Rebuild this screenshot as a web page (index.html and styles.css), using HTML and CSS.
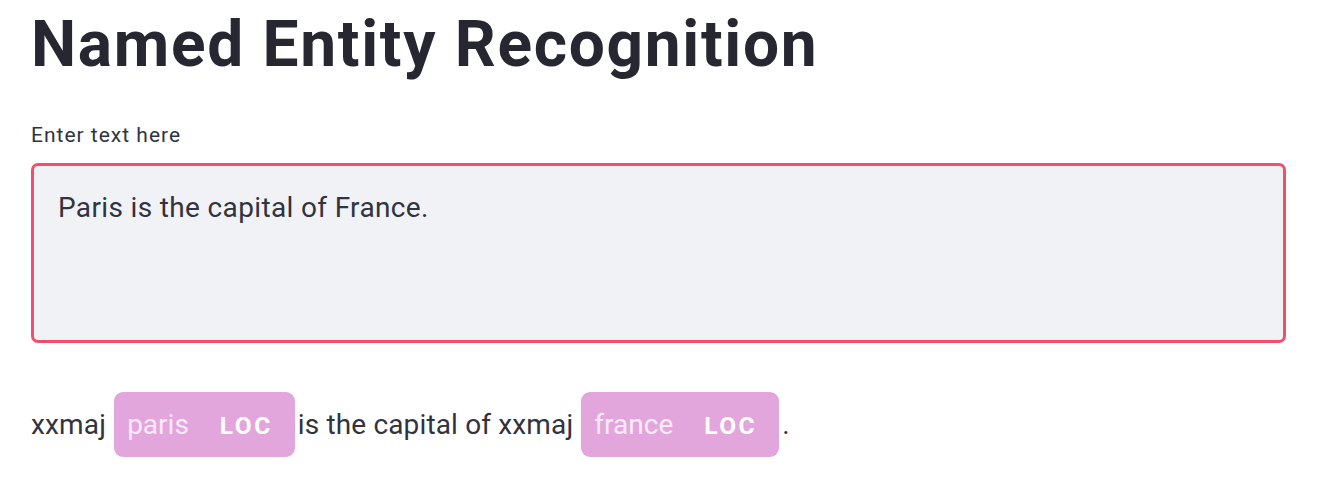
FILE: index.html
```html
<!DOCTYPE html>
<html lang="en">
<head>
<meta charset="utf-8">
<title>Named Entity Recognition</title>
<link rel="stylesheet" href="styles.css">
</head>
<body>
<main class="main">
  <h1 class="title">Named Entity Recognition</h1>
  <label class="field-label" for="input-text">Enter text here</label>
  <textarea id="input-text" class="text-input">Paris is the capital of France.</textarea>
  <div class="entities">xxmaj <mark class="entity">paris<span class="entity-label">LOC</span></mark>is the capital of xxmaj <mark class="entity">france<span class="entity-label">LOC</span></mark>.</div>
</main>
</body>
</html>
```

FILE: styles.css
```css
html, body {
  margin: 0;
  padding: 0;
  background: #ffffff;
}

body {
  font-family: Roboto, "Liberation Sans", sans-serif;
  color: #31333f;
}

.main {
  padding: 7px 40px 0 31px;
  display: flex;
  flex-direction: column;
  align-items: flex-start;
}

.title {
  margin: 0;
  font-size: 64px;
  font-weight: 700;
  line-height: 1.2;
  color: #262730;
  letter-spacing: 1.7px;
}

.field-label {
  margin-top: 37px;
  font-size: 21px;
  line-height: 28px;
  letter-spacing: 1px;
  color: #31333f;
}

.text-input {
  margin: 14px 0 0 0;
  box-sizing: border-box;
  width: 1255px;
  height: 180px;
  border: 3px solid #f24f6d;
  border-radius: 7px;
  background: #f0f2f6;
  padding: 22px 24px;
  font-family: inherit;
  font-size: 28px;
  line-height: 1.4;
  letter-spacing: 0.35px;
  color: #31333f;
  resize: none;
  outline: none;
}

.entities {
  margin-top: 49px;
  font-size: 28px;
  line-height: 65px;
  letter-spacing: 0.15px;
  color: #31333f;
}

.entity {
  display: inline-block;
  background: #e2a6dc;
  color: #fbeaf8;
  border-radius: 9px;
  padding: 0 22px 0 13px;
  margin: 0 3px 0 1px;
  height: 65px;
  line-height: 65px;
  vertical-align: top;
  letter-spacing: 0;
}

.entity-label {
  font-size: 24.5px;
  font-weight: 700;
  letter-spacing: 2.5px;
  color: #ffffff;
  margin-left: 31px;
}
```
